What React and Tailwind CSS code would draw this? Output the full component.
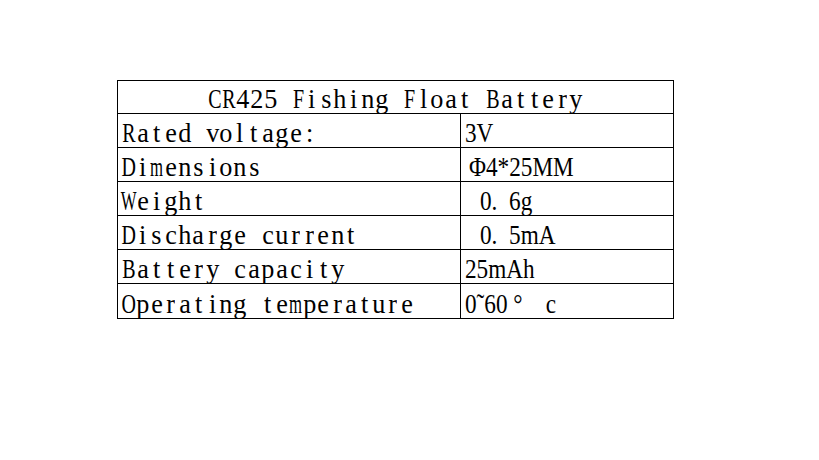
const rows = [
  ['Rated voltage:', '3V', 'pl-[4px]'],
  ['Dimensions', 'Φ4*25MM', 'pl-[8px]'],
  ['Weight', '0.  6g', 'pl-[19px]'],
  ['Discharge current', '0.  5mA', 'pl-[19px]'],
  ['Battery capacity', '25mAh', 'pl-[4px]'],
  ['Operating temperature', '0˜60 °    c', 'pl-[4px]'],
]

const squeeze = (ch) => {
  if ('mwMW'.includes(ch)) return 'scale-x-[0.62]'
  if (ch >= 'A' && ch <= 'Z') return 'scale-x-[0.74]'
  return 'scale-x-[0.97]'
}

// fixed-width serif cells, like the half-width latin of a CJK font
function Mono({ children }) {
  return (
    <span className="inline-flex font-['Liberation_Serif',serif] text-[27px] leading-none text-black">
      {[...children].map((ch, i) => (
        <span key={i} className="inline-flex w-[13.9px] justify-center">
          <span className={`inline-block whitespace-pre ${squeeze(ch)}`}>{ch}</span>
        </span>
      ))}
    </span>
  )
}

function Serif({ children }) {
  return (
    <span className="inline-block origin-left scale-x-[0.86] whitespace-pre font-['Liberation_Serif',serif] text-[27px] leading-none text-black">
      {children}
    </span>
  )
}

export default function App() {
  return (
    <div className="h-[460px] w-[819px] bg-white pl-[117px] pt-[80px]">
      <div className="w-[557px] border border-black">
        <div className="flex h-[33px] items-center justify-center border-b border-black pt-[5px]">
          <Mono>CR425 Fishing Float Battery</Mono>
        </div>
        {rows.map(([label, value, pad], i) => (
          <div
            key={label}
            className={`grid h-[34px] grid-cols-[343px_1fr] ${i < rows.length - 1 ? 'border-b border-black' : ''}`}
          >
            <div className="flex items-center border-r border-black pl-[4px] pt-[6px]">
              <Mono>{label}</Mono>
            </div>
            <div className={`flex items-center pt-[6px] ${pad}`}>
              <Serif>{value}</Serif>
            </div>
          </div>
        ))}
      </div>
    </div>
  )
}
